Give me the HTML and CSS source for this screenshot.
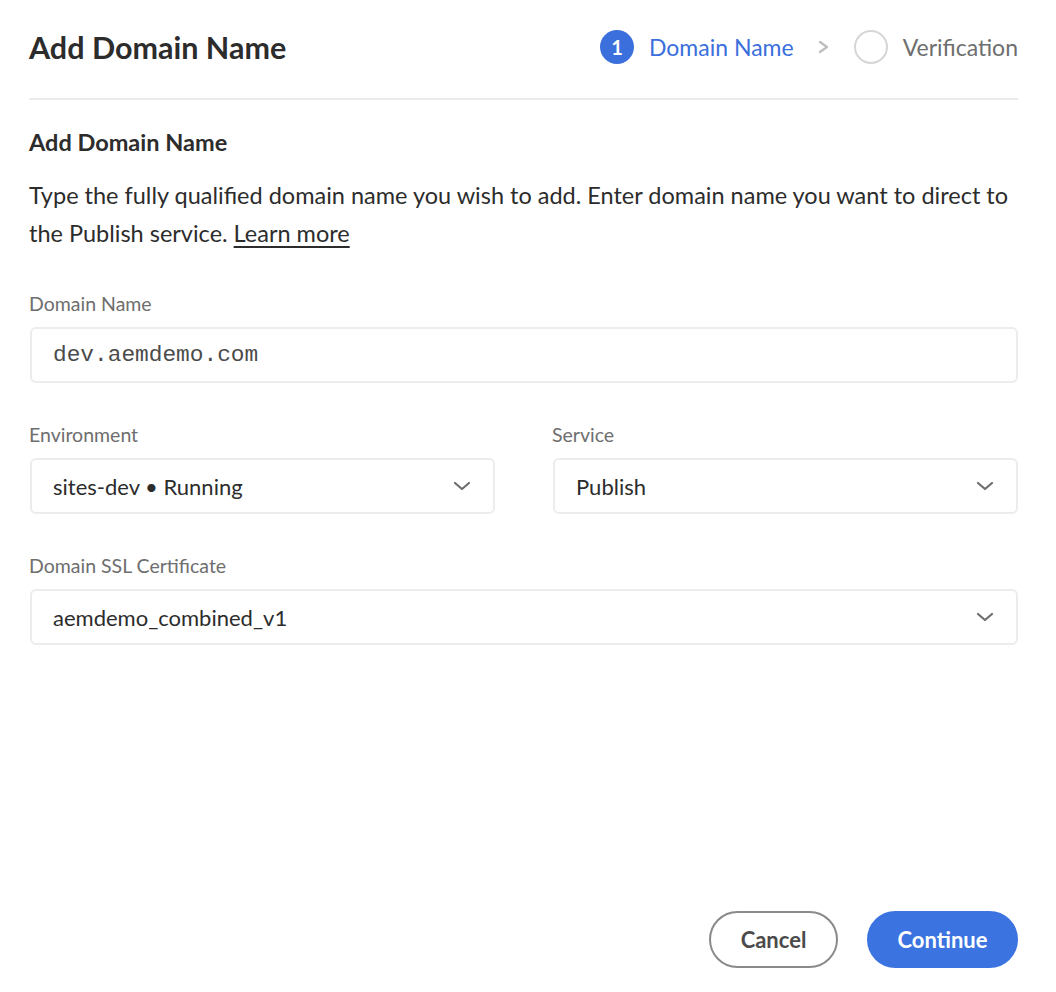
FILE: index.html
```html
<!DOCTYPE html>
<html lang="en">
<head>
<meta charset="utf-8">
<title>Add Domain Name</title>
<link rel="stylesheet" href="styles.css">
</head>
<body>
<div class="dialog">
  <header class="header">
    <h1 class="title">Add Domain Name</h1>
    <ol class="stepper">
      <li class="step step-active"><span class="step-num">1</span><span class="step-label">Domain Name</span></li>
      <li class="step-sep">
        <svg width="13" height="14" viewBox="0 0 13 14"><path d="M3 2 L10 7 L3 12" fill="none" stroke="#bdbdbd" stroke-width="2.2" stroke-linecap="round" stroke-linejoin="round"/></svg>
      </li>
      <li class="step"><span class="step-num step-empty"></span><span class="step-label step-label-idle">Verification</span></li>
    </ol>
  </header>

  <main class="content">
    <h2 class="subtitle">Add Domain Name</h2>
    <p class="desc">Type the fully qualified domain name you wish to add. Enter domain name you want to direct to the Publish service. <a class="link" href="#">Learn more</a></p>

    <div class="field">
      <label class="label">Domain Name</label>
      <div class="box input-mono">dev.aemdemo.com</div>
    </div>

    <div class="field-row">
      <div class="field">
        <label class="label">Environment</label>
        <div class="box select"><span>sites-dev • Running</span>
          <svg class="chev" width="18" height="10" viewBox="0 0 18 10"><path d="M2 2 L9 8 L16 2" fill="none" stroke="#6e6e6e" stroke-width="2.2" stroke-linecap="round" stroke-linejoin="round"/></svg>
        </div>
      </div>
      <div class="field">
        <label class="label">Service</label>
        <div class="box select"><span>Publish</span>
          <svg class="chev" width="18" height="10" viewBox="0 0 18 10"><path d="M2 2 L9 8 L16 2" fill="none" stroke="#6e6e6e" stroke-width="2.2" stroke-linecap="round" stroke-linejoin="round"/></svg>
        </div>
      </div>
    </div>

    <div class="field">
      <label class="label">Domain SSL Certificate</label>
      <div class="box select"><span>aemdemo_combined_v1</span>
        <svg class="chev" width="18" height="10" viewBox="0 0 18 10"><path d="M2 2 L9 8 L16 2" fill="none" stroke="#6e6e6e" stroke-width="2.2" stroke-linecap="round" stroke-linejoin="round"/></svg>
      </div>
    </div>
  </main>

  <footer class="footer">
    <button class="btn btn-secondary">Cancel</button>
    <button class="btn btn-primary">Continue</button>
  </footer>
</div>
</body>
</html>
```

FILE: styles.css
```css
* { box-sizing: border-box; }
html, body { margin: 0; padding: 0; background: #fff; }
body {
  font-family: "Lato", "Noto Sans", sans-serif;
  color: #2c2c2c;
}
.dialog {
  height: 992px;
  padding: 0 38px 24px 29px;
  display: flex;
  flex-direction: column;
}
.header {
  height: 100px;
  padding-bottom: 4px;
  display: flex;
  align-items: center;
  justify-content: space-between;
  border-bottom: 2px solid #ebebeb;
  flex-shrink: 0;
}
.title {
  margin: 0;
  font-size: 30.5px;
  font-weight: 700;
  color: #2c2c2c;
  line-height: 36px;
}
.stepper {
  list-style: none;
  margin: 0;
  padding: 0;
  display: flex;
  align-items: center;
}
.step { display: flex; align-items: center; }
.step-num {
  width: 34px;
  height: 34px;
  border-radius: 50%;
  background: #3b6fdc;
  color: #fff;
  font-size: 20px;
  font-weight: 700;
  display: flex;
  align-items: center;
  justify-content: center;
  margin-right: 15px;
}
.step-empty {
  background: #fff;
  border: 2px solid #d6d6d6;
}
.step-label {
  font-size: 23px;
  color: #3b6fdc;
  line-height: 30px;
}
.step-label-idle { color: #6e6e6e; }
.step-sep {
  display: flex;
  align-items: center;
  margin: 0 24px 0 23px;
}
.content {
  padding-top: 28px;
}
.subtitle {
  margin: 0;
  font-size: 23.5px;
  font-weight: 700;
  line-height: 28px;
  color: #2c2c2c;
}
.desc {
  margin: 20px 0 0;
  font-size: 23.5px;
  line-height: 38px;
  color: #2c2c2c;
}
.link {
  color: #2c2c2c;
  text-decoration: underline;
  text-underline-offset: 4px;
  text-decoration-thickness: 2px;
}
.field { margin-top: 40px; }
.field-row {
  display: grid;
  grid-template-columns: 1fr 1fr;
  column-gap: 57px;
}
.field-row .field { margin-top: 40px; }
.label {
  display: block;
  font-size: 19.5px;
  line-height: 24px;
  color: #6e6e6e;
  margin-bottom: 11px;
}
.box {
  height: 56px;
  border: 2px solid #ececec;
  border-radius: 6px;
  margin-left: 1px;
  display: flex;
  align-items: center;
  font-size: 22px;
  color: #2c2c2c;
}
.input-mono {
  padding-left: 21px;
  font-family: "Liberation Mono", "DejaVu Sans Mono", monospace;
  font-size: 22.8px;
  color: #4b4b4b;
}
.select {
  padding: 0 22px 0 21px;
  justify-content: space-between;
}
.chev { flex-shrink: 0; }
.footer {
  margin-top: auto;
  display: flex;
  justify-content: flex-end;
  gap: 29px;
}
.btn {
  height: 57px;
  border-radius: 29px;
  font-family: "Lato", "Noto Sans", sans-serif;
  font-size: 22px;
  font-weight: 700;
  padding: 0 20px;
  cursor: pointer;
}
.btn-secondary {
  background: #fff;
  border: 2px solid #8a8a8a;
  color: #4b4b4b;
  width: 129px;
}
.btn-primary {
  background: #3b73e0;
  border: 2px solid #3b73e0;
  color: #fff;
  width: 151px;
}
```
